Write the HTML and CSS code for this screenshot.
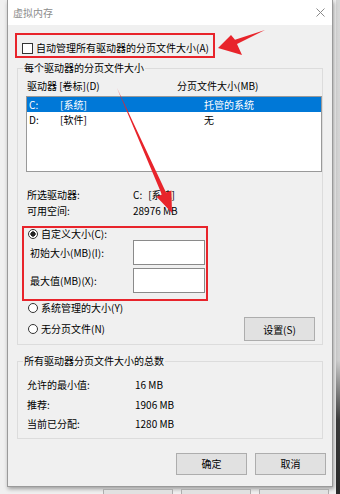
FILE: index.html
```html
<!DOCTYPE html>
<html lang="zh-CN">
<head>
  <meta charset="UTF-8">
  <meta name="viewport" content="width=device-width, initial-scale=1.0">
  <title>虚拟内存</title>
  <link rel="stylesheet" href="styles.css">
</head>
<body>
  <div class="dialog">
    <div class="dialog-title">
      <span>虚拟内存</span>
      <svg class="close-icon" width="9" height="9" viewBox="0 0 9 9">
        <path d="M0.5 0.5L8.5 8.5M8.5 0.5L0.5 8.5" stroke="#8a8a8a" stroke-width="1"/>
      </svg>
    </div>

    <div class="dialog-body">
      <label class="mark auto-manage">
        <input type="checkbox" class="check">
        <span>自动管理所有驱动器的分页文件大小(A)</span>
      </label>

      <fieldset class="group">
        <legend>每个驱动器的分页文件大小</legend>
        <div class="group-inner">
          <div class="list-head">
            <span class="col-drive">驱动器 [卷标](D)</span>
            <span>分页文件大小(MB)</span>
          </div>
          <div class="drive-list">
            <div class="drive-row selected"><span>C:</span><span>[系统]</span><span>托管的系统</span></div>
            <div class="drive-row"><span>D:</span><span>[软件]</span><span>无</span></div>
          </div>

          <div class="info">
            <span>所选驱动器:</span><span>C:<span class="label-gap">[系统]</span></span>
            <span>可用空间:</span><span>28976 MB</span>
          </div>

          <div class="mark custom-size">
            <label class="radio-row top-radio"><input type="radio" name="size" class="radio" checked>自定义大小(C):</label>
            <div class="field-row">
              <label for="initial">初始大小(MB)(I):</label>
              <input type="text" id="initial" class="size-input">
            </div>
            <div class="field-row">
              <label for="maximum">最大值(MB)(X):</label>
              <input type="text" id="maximum" class="size-input">
            </div>
          </div>

          <label class="radio-row"><input type="radio" name="size" class="radio">系统管理的大小(Y)</label>
          <div class="radio-last">
            <label class="radio-row"><input type="radio" name="size" class="radio">无分页文件(N)</label>
            <button class="btn set-btn">设置(S)</button>
          </div>
        </div>
      </fieldset>

      <fieldset class="group totals-group">
        <legend>所有驱动器分页文件大小的总数</legend>
        <div class="totals">
          <span>允许的最小值:</span><span>16 MB</span>
          <span>推荐:</span><span>1906 MB</span>
          <span>当前已分配:</span><span>1280 MB</span>
        </div>
      </fieldset>

      <div class="dialog-buttons">
        <button class="btn">确定</button>
        <button class="btn">取消</button>
      </div>
    </div>
  </div>

  <div class="backdrop-buttons">
    <span></span><span></span><span></span>
  </div>

  <svg class="annotations" width="340" height="494" viewBox="0 0 340 494">
    <polygon fill="#e8242b" points="218,48 231,35 235,39.8 265,30 237,44 242,55"/>
    <polygon fill="#e8242b" points="172,213 156.6,196.8 161.8,194.6 117,88 166,192.6 171.4,190.4"/>
  </svg>
</body>
</html>
```

FILE: styles.css
```css
body {
  margin: 0;
  width: 340px;
  height: 494px;
  overflow: hidden;
  position: relative;
  font-family: "Noto Sans CJK SC", sans-serif;
  font-size: 10px;
  color: #000;
  background:
    linear-gradient(to right, #f0f0f0 336px, transparent 336px),
    linear-gradient(to bottom, #d6d6d6 0, #cfcfcf 360px, #3c3c3c 420px, #2a2a2a 494px);
}

.dialog {
  margin-left: 7px;
  width: 326px;
  box-sizing: border-box;
  border: 1px solid #9a9a9a;
  border-top: none;
  background: #f0f0f0;
  box-shadow: 1px 2px 4px rgba(0, 0, 0, 0.35);
}

.dialog-title {
  height: 25px;
  background: #fff;
  display: flex;
  align-items: center;
  justify-content: space-between;
  padding: 0 7px 0 5px;
  color: #8c8c8c;
  line-height: 14px;
}

.dialog-body {
  padding: 8px 9px 11px;
}

.mark {
  border: 2px solid #e8242b;
  box-sizing: border-box;
}

.auto-manage {
  display: flex;
  align-items: center;
  width: 200px;
  margin-left: -2px;
  padding: 6px 0 1px 5px;
  line-height: 14px;
  white-space: nowrap;
}

.check {
  appearance: none;
  width: 11px;
  height: 11px;
  margin: 0 3px 0 0;
  border: 1px solid #333;
  background: #fff;
  box-sizing: border-box;
}

.group {
  margin: 3px 0 0;
  padding: 0 0 3px;
  border: 1px solid #dcdcdc;
  min-width: 0;
}

.group legend {
  margin-left: 5px;
  padding: 0 1px;
  line-height: 14px;
}

.group-inner {
  padding: 4px 0 0 9px;
}

.list-head {
  display: flex;
  line-height: 14px;
  margin-bottom: 3px;
}

.col-drive {
  width: 150px;
}

.drive-list {
  margin-left: -1px;
  height: 76px;
  box-sizing: border-box;
  border: 1px solid #999;
  background: #fff;
}

.drive-row {
  display: grid;
  grid-template-columns: 31px 144px 1fr;
  height: 15px;
  line-height: 15px;
  padding-left: 2px;
}

.drive-row.selected {
  background: #0078d7;
  color: #fff;
}

.info {
  display: grid;
  grid-template-columns: 106px auto;
  line-height: 16px;
  margin-top: 15px;
}

.label-gap {
  margin-left: 6px;
}

.custom-size {
  width: 186px;
  margin: 7px 0 0 -5px;
  padding: 0 0 6px;
}

.radio-row {
  display: flex;
  align-items: center;
  line-height: 14px;
  padding-left: 1px;
}

.top-radio {
  line-height: 12px;
  padding-left: 4px;
}

.radio {
  appearance: none;
  width: 10px;
  height: 10px;
  margin: 0 3px 0 0;
  border: 1px solid #333;
  border-radius: 50%;
  background: #fff;
  box-sizing: border-box;
}

.radio:checked {
  background: radial-gradient(circle, #222 0 2.4px, #fff 2.9px);
}

.field-row {
  display: flex;
  align-items: center;
  height: 25px;
  padding-left: 6px;
}

.field-row + .field-row {
  margin-top: 3px;
}

.field-row label {
  width: 103px;
}

.size-input {
  width: 72px;
  height: 25px;
  box-sizing: border-box;
  margin: 0;
  border: 1px solid #8a8a8a;
  background: #fff;
}

.radio-last {
  display: flex;
  align-items: center;
  justify-content: space-between;
  height: 24px;
  margin-top: 2px;
}

.btn {
  width: 71px;
  height: 22px;
  margin: 0;
  padding: 0;
  border: 1px solid #adadad;
  background: #e1e1e1;
  font-family: inherit;
  font-size: 10px;
  color: #000;
}

.set-btn {
  height: 24px;
  margin-right: 7px;
}

.totals-group {
  margin-top: 9px;
  padding-bottom: 4px;
}

.totals {
  display: grid;
  grid-template-columns: 108px auto;
  line-height: 19.5px;
  padding: 7px 0 0 9px;
}

.dialog-buttons {
  display: flex;
  justify-content: flex-end;
  gap: 8px;
  margin: 14px -3px 0 0;
}

.backdrop-buttons {
  display: flex;
  gap: 8px;
  margin: 2px 0 0 103px;
}

.backdrop-buttons span {
  width: 70px;
  height: 20px;
  box-sizing: border-box;
  border: 1px solid #adadad;
  background: #e1e1e1;
}

.annotations {
  position: absolute;
  top: 0;
  left: 0;
  pointer-events: none;
}
```
